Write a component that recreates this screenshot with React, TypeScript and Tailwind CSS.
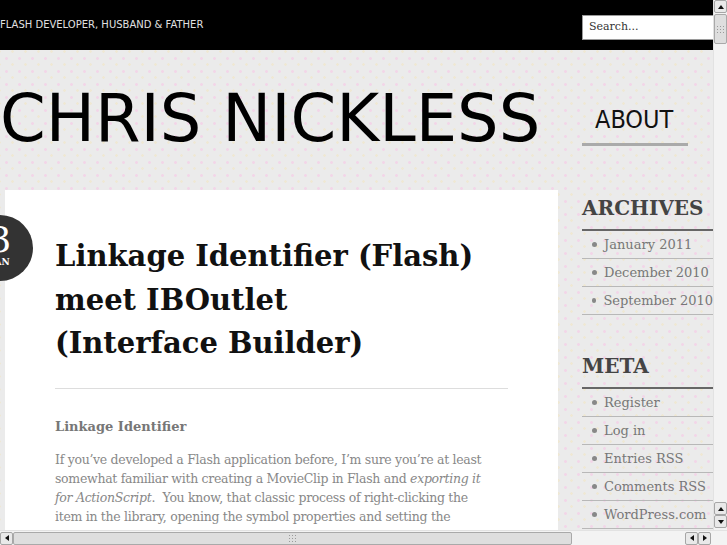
import React from 'react';

const archives = ['January 2011', 'December 2010', 'September 2010'];
const meta = ['Register', 'Log in', 'Entries RSS', 'Comments RSS', 'WordPress.com'];

const pattern =
  "bg-[#ebebeb] bg-[image:radial-gradient(circle,#f2d6e8_1.2px,transparent_1.6px),radial-gradient(circle,#efe8d4_1px,transparent_1.5px)] bg-[length:13px_13px] bg-[position:0_0,6px_6px]";

function Arrow({ dir }: { dir: 'up' | 'down' | 'left' | 'right' }) {
  const pts = {
    up: '1,6 4,2 7,6',
    down: '1,2 4,6 7,2',
    left: '6,1 2,4 6,7',
    right: '2,1 6,4 2,7',
  }[dir];
  return (
    <div className="w-[13px] h-[13px] flex items-center justify-center bg-[#e9e9e9] border border-[#a6a6a6] rounded-[2px]">
      <svg width="8" height="8" viewBox="0 0 8 8">
        <polygon points={pts} fill="#111" />
      </svg>
    </div>
  );
}

function Grip() {
  return (
    <div className="grid grid-cols-3 gap-[2px]">
      {Array.from({ length: 9 }).map((_, i) => (
        <div key={i} className="w-[1px] h-[1px] bg-[#9a9a9a]" />
      ))}
    </div>
  );
}

function Widget({ title, items, className }: { title: string; items: string[]; className?: string }) {
  return (
    <div className={className}>
      <h3 className="text-[20px] leading-[24px] font-bold text-[#444] pb-[9px] border-b-2 border-[#666]">{title}</h3>
      <ul>
        {items.map((item) => (
          <li key={item} className="h-[28px] flex items-center border-b border-[#b8b8b8] pl-[10px] text-[13px] text-[#777]">
            <span className="w-[5px] h-[5px] rounded-full bg-[#888] mr-[7px]" />
            {item}
          </li>
        ))}
      </ul>
    </div>
  );
}

export default function App() {
  return (
    <div className="w-[727px] h-[545px] flex flex-col overflow-hidden bg-white font-['DejaVu_Serif',serif]">
      <div className="flex flex-1 min-h-0">
        <div className={`w-[713px] overflow-hidden relative ${pattern}`}>
          {/* top bar */}
          <div className="h-[50px] bg-black flex items-center justify-between">
            <span className="font-['DejaVu_Sans',sans-serif] text-[10px] text-[#e0e0e0] -mt-[1px]">
              FLASH DEVELOPER, HUSBAND &amp; FATHER
            </span>
            <div className="mt-[5px] w-[131px] h-[25px] bg-white border border-[#9a9a9a] border-r-0 flex items-center px-[6px] text-[11px] text-[#333]">
              Search...
            </div>
          </div>

          {/* header */}
          <div className="h-[140px] flex">
            <div className="w-[582px] pt-[33px]">
              <h1 className="font-['DejaVu_Sans',sans-serif] text-[65.5px] leading-[70px] text-black whitespace-nowrap">
                CHRIS NICKLESS
              </h1>
            </div>
            <div className="pt-[55px]">
              <div className="w-[106px] pb-[8px] border-b-[3px] border-[#aaaaaa] pl-[13px] font-['DejaVu_Sans_Condensed','DejaVu_Sans',sans-serif] text-[25px] leading-[30px] text-[#111]">
                ABOUT
              </div>
            </div>
          </div>

          {/* main */}
          <div className="flex pl-[5px]">
            <div className="w-[553px] h-[400px] bg-white pl-[50px] pr-[50px] pt-[45px]">
              <h2 className="text-[29px] leading-[43.5px] font-bold text-[#111] whitespace-nowrap">
                Linkage Identifier (Flash)<br />
                meet IBOutlet<br />
                (Interface Builder)
              </h2>
              <div className="mt-[22px] border-t border-[#dddddd]" />
              <h4 className="mt-[28px] text-[13px] font-bold text-[#777]">Linkage Identifier</h4>
              <p className="mt-[14px] text-[12.5px] leading-[19px] text-[#888] tracking-[-0.3px] whitespace-nowrap">
                If you&rsquo;ve developed a Flash application before, I&rsquo;m sure you&rsquo;re at least<br />
                somewhat familiar with creating a MovieClip in Flash and <em>exporting it</em><br />
                <em>for ActionScript</em>.&nbsp; You know, that classic process of right-clicking the<br />
                item in the library, opening the symbol properties and setting the<br />
                linkage identifier to some fancy name to make an AS3 class out of
              </p>
            </div>

            <div className="ml-[24px] w-[131px] pt-[6px] whitespace-nowrap">
              <Widget title="ARCHIVES" items={archives} />
              <Widget title="META" items={meta} className="mt-[39px]" />
            </div>
          </div>

          {/* date badge */}
          <div className="absolute left-[-33px] top-[215px] w-[66px] h-[66px] rounded-full bg-[#333] text-white flex flex-col items-center justify-center">
            <span className="text-[36px] leading-[32px] -mt-[4px]">3</span>
            <span className="text-[9px] leading-[12px] font-bold">JAN</span>
          </div>
        </div>

        {/* vertical scrollbar */}
        <div className="w-[14px] flex flex-col bg-[#f3f3f3] border-l border-[#e2e2e2]">
          <Arrow dir="up" />
          <div className="mt-[1px] h-[30px] bg-[#dedede] border border-[#a9a9a9] rounded-[2px] flex items-center justify-center">
            <Grip />
          </div>
          <div className="flex-1" />
          <Arrow dir="up" />
          <Arrow dir="down" />
          <div className="h-[2px]" />
        </div>
      </div>

      {/* horizontal scrollbar */}
      <div className="h-[15px] flex items-center bg-[#f3f3f3] border-t border-[#e2e2e2]">
        <Arrow dir="left" />
        <div className="w-[559px] h-[13px] bg-[#dedede] border border-[#a9a9a9] rounded-[2px] flex items-center justify-center">
          <Grip />
        </div>
        <div className="flex-1" />
        <Arrow dir="left" />
        <Arrow dir="right" />
        <div className="w-[16px]" />
      </div>
    </div>
  );
}
